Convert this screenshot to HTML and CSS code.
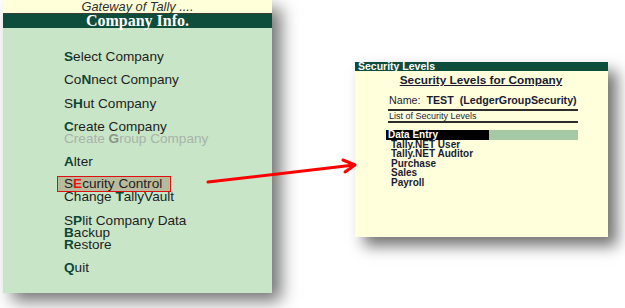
FILE: index.html
```html
<!DOCTYPE html>
<html lang="en">
<head>
    <meta charset="UTF-8">
    <title>Company Info - Security Control</title>
    <link rel="stylesheet" href="styles.css">
</head>
<body>
<div class="stage">
    <div class="company-panel">
        <div class="gateway">Gateway of Tally ....</div>
        <div class="panel-title">Company Info.</div>
        <div class="menu">
            <div class="group">
                <div class="item"><b>S</b>elect Company</div>
            </div>
            <div class="group">
                <div class="item">Co<b>N</b>nect Company</div>
            </div>
            <div class="group">
                <div class="item">S<b>H</b>ut Company</div>
            </div>
            <div class="group">
                <div class="item"><b>C</b>reate Company</div>
                <div class="item off">Create <b>G</b>roup Company</div>
            </div>
            <div class="group">
                <div class="item"><b>A</b>lter</div>
            </div>
            <div class="group">
                <div class="item active">S<b>E</b>curity Control</div>
                <div class="item">Change <b>T</b>allyVault</div>
            </div>
            <div class="group">
                <div class="item">S<b>P</b>lit Company Data</div>
                <div class="item"><b>B</b>ackup</div>
                <div class="item"><b>R</b>estore</div>
            </div>
            <div class="group">
                <div class="item"><b>Q</b>uit</div>
            </div>
        </div>
    </div>

    <div class="levels-panel">
        <div class="levels-head">Security Levels</div>
        <div class="levels-body">
            <div class="levels-title">Security Levels for Company</div>
            <div class="levels-name">Name:&nbsp; <b>TEST&nbsp; (LedgerGroupSecurity)</b></div>
            <div class="levels-caption">List of Security Levels</div>
            <ul class="levels-list">
                <li class="current"><span>Data Entry</span></li>
                <li>Tally.NET User</li>
                <li>Tally.NET Auditor</li>
                <li>Purchase</li>
                <li>Sales</li>
                <li>Payroll</li>
            </ul>
        </div>
    </div>

    <svg class="pointer" width="625" height="308" viewBox="0 0 625 308">
        <g fill="none" stroke="#ff0000" stroke-width="3" stroke-linecap="round" stroke-linejoin="round">
            <line x1="208" y1="182" x2="354" y2="165"/>
            <polyline points="343,160 355,165 345,172"/>
        </g>
    </svg>
</div>
</body>
</html>
```

FILE: styles.css
```css
/*reset*/
body,div,ul,li{
    padding: 0;
    margin: 0;
}
body{
    background: #fff;
    font-family: "Liberation Sans", Arial, sans-serif;
}
.stage{
    position: relative;
    width: 625px;
    height: 308px;
    display: flex;
    align-items: flex-start;
    overflow: hidden;
}

/*company info*/
.company-panel{
    width: 269px;
    height: 293px;
    margin-left: 3px;
    display: flex;
    flex-direction: column;
    background: #c8e5c8;
    box-shadow: 9px 8px 16px rgba(0,0,0,0.55);
}
.gateway{
    height: 13px;
    line-height: 13px;
    background: #ffffd9;
    border-bottom: 1px solid #3c3c30;
    text-align: center;
    font-size: 12.8px;
    font-style: italic;
    color: #2e2e2e;
}
.panel-title{
    height: 14px;
    line-height: 14px;
    background: #0e4c3b;
    text-align: center;
    color: #fff;
    font-family: "Liberation Serif", "Times New Roman", serif;
    font-weight: bold;
    font-size: 16px;
}
.menu{
    padding: 23px 0 0 61px;
    display: flex;
    flex-direction: column;
    gap: 11.3px;
}
.item{
    height: 12px;
    line-height: 12px;
    font-size: 13.6px;
    color: #1e1e1e;
    white-space: nowrap;
}
.item b{
    color: #0b4636;
}
.item.off{
    color: #a9b3a8;
}
.item.off b{
    color: #8a948a;
}
.item.active{
    margin: -3px 0 -1px -7px;
    padding-left: 6px;
    width: 106px;
    height: 14px;
    line-height: 14px;
    border: 1px solid #e01010;
    background: #b8ba9c;
}
.item.active b{
    color: #f01010;
}

/*security levels*/
.levels-panel{
    width: 253px;
    height: 175px;
    margin: 62px 0 0 83px;
    background: #ffffdc;
    box-shadow: 9px 9px 14px rgba(0,0,0,0.55);
}
.levels-head{
    height: 9px;
    line-height: 9px;
    padding-left: 3px;
    background: #0e4c3b;
    color: #fff;
    font-weight: bold;
    font-size: 10.5px;
}
.levels-body{
    padding: 3px 30px 0 33px;
    color: #1b1b33;
}
.levels-title{
    margin-left: -4px;
    text-align: center;
    font-weight: bold;
    font-size: 11.8px;
    line-height: 12px;
    text-decoration: underline;
}
.levels-name{
    margin-top: 8px;
    padding-left: 1px;
    font-size: 10.7px;
    line-height: 12px;
    white-space: nowrap;
}
.levels-caption{
    margin-top: 3px;
    border-top: 2px solid #2d2d2d;
    border-bottom: 2px solid #2d2d2d;
    font-size: 9px;
    line-height: 10px;
    padding-left: 1px;
}
.levels-list{
    list-style: none;
    margin-top: 7px;
}
.levels-list li{
    height: 9.6px;
    line-height: 9.6px;
    padding-left: 3px;
    font-weight: bold;
    font-size: 10px;
    white-space: nowrap;
}
.levels-list li.current{
    margin-left: -2px;
    padding-left: 0;
    display: flex;
    background: #a4c9a4;
}
.levels-list li.current span{
    width: 101px;
    padding-left: 2px;
    background: #000;
    color: #fff;
}

.pointer{
    position: absolute;
    left: 0;
    top: 0;
}
```
